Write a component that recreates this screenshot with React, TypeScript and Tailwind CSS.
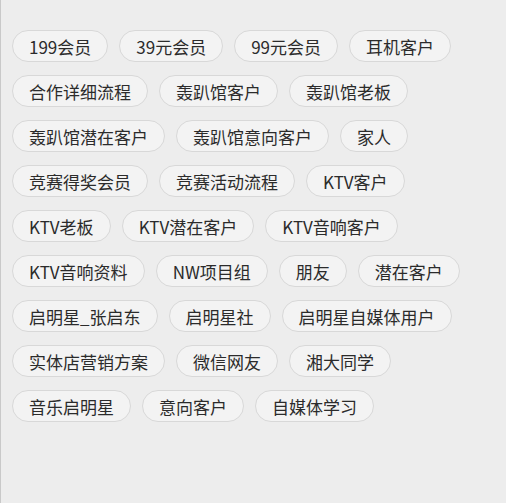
import React from "react";

const tags: string[] = [
  "199会员",
  "39元会员",
  "99元会员",
  "耳机客户",
  "合作详细流程",
  "轰趴馆客户",
  "轰趴馆老板",
  "轰趴馆潜在客户",
  "轰趴馆意向客户",
  "家人",
  "竞赛得奖会员",
  "竞赛活动流程",
  "KTV客户",
  "KTV老板",
  "KTV潜在客户",
  "KTV音响客户",
  "KTV音响资料",
  "NW项目组",
  "朋友",
  "潜在客户",
  "启明星_张启东",
  "启明星社",
  "启明星自媒体用户",
  "实体店营销方案",
  "微信网友",
  "湘大同学",
  "音乐启明星",
  "意向客户",
  "自媒体学习",
];

const App: React.FC = () => {
  return (
    <div
      className="w-[506px] h-[503px] bg-[#ededed] border-l border-[#c9c9c9] overflow-hidden"
      style={{ fontFamily: '"Noto Sans CJK SC", "Noto Sans", sans-serif' }}
    >
      <div className="flex flex-wrap gap-x-[11px] gap-y-[13px] pt-[30px] pl-[11px] pr-[10px]">
        {tags.map((tag) => (
          <span
            key={tag}
            className="h-[32px] px-[16px] flex items-center rounded-full border border-[#d8d8d8] bg-[#f3f3f3] text-[17px] leading-none text-[#2b2b2b]"
          >
            {tag}
          </span>
        ))}
      </div>
    </div>
  );
};

export default App;
